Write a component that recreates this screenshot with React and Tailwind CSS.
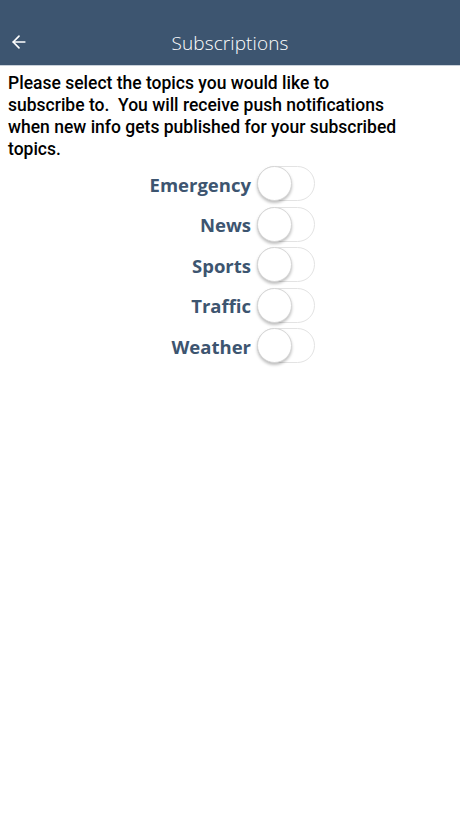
import React, { useState } from 'react';
import { ArrowLeft } from 'lucide-react';

const topics = ['Emergency', 'News', 'Sports', 'Traffic', 'Weather'];

const Toggle = ({ on, onClick }) => (
  <button
    onClick={onClick}
    className={`relative block w-[58px] h-[35px] rounded-full border border-[#e3e3e3] ${on ? 'bg-[#4cd964]' : 'bg-white'}`}
  >
    <span
      className={`absolute top-[-1px] w-[35px] h-[35px] rounded-full bg-white border border-[#d6d6d6] shadow-[0_2px_3px_rgba(0,0,0,0.25)] ${on ? 'left-[22px]' : 'left-[-1px]'}`}
    />
  </button>
);

const App = () => {
  const [subs, setSubs] = useState({});

  return (
    <div className="min-h-screen bg-white" style={{ fontFamily: 'Roboto, "Liberation Sans", sans-serif' }}>
      <div className="h-[66px] bg-[#3d5570] border-b border-[#c9d1da] flex items-end pb-[8px] relative">
        <button className="absolute left-[9px] bottom-[13px] text-white">
          <ArrowLeft size={20} strokeWidth={2} />
        </button>
        <h1
          className="w-full text-center text-white text-[19px] font-light tracking-[0.1px]"
          style={{ fontFamily: '"Open Sans", sans-serif' }}
        >
          Subscriptions
        </h1>
      </div>

      <p className="pl-[8px] w-[404px] pt-[6px] text-[17.5px] leading-[22px] font-medium text-black">
        Please select the topics you would like to subscribe to.&nbsp; You will receive push notifications when new info gets published for your subscribed topics.
      </p>

      <div className="mt-[6px] flex flex-col gap-[5.5px]">
        {topics.map((t) => (
          <div key={t} className="grid grid-cols-[251px_1fr] items-center gap-[6px]">
            <span
              className="text-right text-[18.5px] leading-[24px] font-bold text-[#3d5570] pt-[2px]"
              style={{ fontFamily: '"Open Sans", sans-serif' }}
            >
              {t}
            </span>
            <div className="flex">
              <Toggle on={!!subs[t]} onClick={() => setSubs({ ...subs, [t]: !subs[t] })} />
            </div>
          </div>
        ))}
      </div>
    </div>
  );
};

export default App;
